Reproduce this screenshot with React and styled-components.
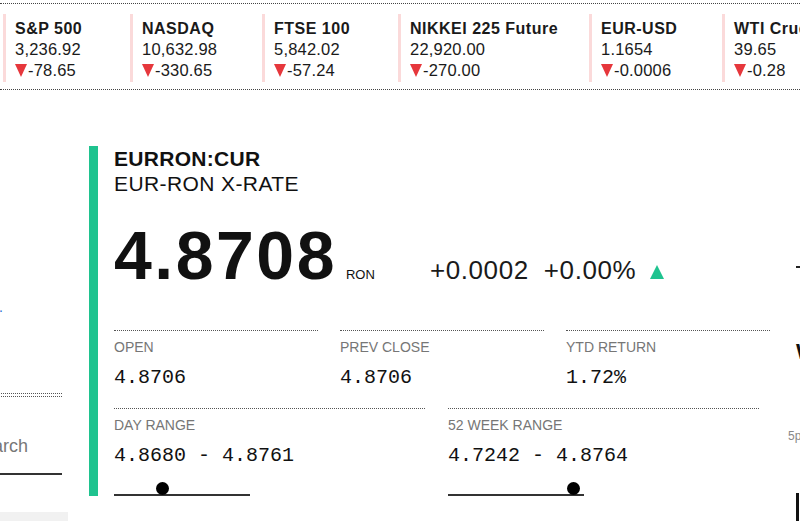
import React from 'react'
import styled, { createGlobalStyle } from 'styled-components'

const GlobalStyle = createGlobalStyle`
body{
  margin: 0;
  background: #fff;
  overflow: hidden;
  font-family: "Liberation Sans", Arial, sans-serif;
  color: #111;
}
`

const Page = styled.div`
width: 800px;
height: 521px;
overflow: hidden;
position: relative;
`

const Ticker = styled.div`
margin-top: 3px;
display: flex;
border-top: 1px dotted #444;
border-bottom: 1px dotted #444;
padding: 10px 0 7px 3px;
overflow: hidden;
white-space: nowrap;
`

const TickerItem = styled.div`
flex-shrink: 0;
width: ${props => props.$w}px;
box-sizing: border-box;
border-left: 3px solid #fbdada;
padding: 4px 0 1px 9px;
font-size: 16.5px;
line-height: 21px;
color: #1a1a1a;
letter-spacing: 0.2px;
`

const TickerName = styled.div`
font-weight: 700;
font-size: 16px;
letter-spacing: 0.5px;
`

const TickerChange = styled.div`
display: flex;
align-items: center;
`

const DownArrow = styled.span`
display: inline-block;
width: 0;
height: 0;
border-left: 6px solid transparent;
border-right: 6px solid transparent;
border-top: 13px solid #e6373c;
margin-right: 1px;
`

const Main = styled.div`
display: flex;
align-items: flex-start;
padding-top: 56px;
`

const Sidebar = styled.div`
flex-shrink: 0;
width: 100px;
margin-left: -38px;
margin-right: 27px;
display: flex;
flex-direction: column;
`

const SideLink = styled.div`
margin-top: 152px;
width: 41px;
display: flex;
justify-content: flex-end;
white-space: nowrap;
font-size: 14px;
line-height: 18px;
color: #2a6bd1;
`

const DoubleDots = styled.div`
margin-top: 77px;
height: 2px;
border-top: 1px dotted #555;
border-bottom: 1px dotted #555;
`

const SearchBox = styled.div`
margin-top: 38px;
padding: 0 0 16px 9px;
border-bottom: 2px solid #333;
font-size: 18px;
line-height: 22px;
color: #777;
`

const GreyBlock = styled.div`
margin-top: 37px;
width: 106px;
height: 20px;
background: #f1f1f1;
`

const Card = styled.div`
flex-shrink: 0;
width: 655px;
border-left: 9px solid #1fc38f;
padding-left: 16px;
`

const Symbol = styled.div`
font-size: 21px;
line-height: 25px;
font-weight: 700;
letter-spacing: 0.3px;
`

const Name = styled.div`
font-size: 21px;
line-height: 25px;
letter-spacing: 0.4px;
`

const PriceRow = styled.div`
margin-top: 25px;
display: flex;
align-items: baseline;
line-height: 68px;
height: 68px;
`

const Price = styled.span`
font-size: 68px;
font-weight: 700;
letter-spacing: 2.5px;
`

const Currency = styled.span`
font-size: 13px;
margin-left: 9px;
`

const Change = styled.span`
font-size: 26px;
letter-spacing: 0.6px;
margin-left: ${props => props.$gap}px;
color: #1a1a1a;
`

const UpArrow = styled.span`
display: inline-block;
width: 0;
height: 0;
margin-left: 14px;
border-left: 7px solid transparent;
border-right: 7px solid transparent;
border-bottom: 14px solid #1fc38f;
`

const StatsRow = styled.div`
display: grid;
grid-template-columns: repeat(${props => props.$cols}, ${props => props.$colw}px);
column-gap: ${props => props.$gap}px;
margin-top: ${props => props.$top}px;
`

const Stat = styled.div`
border-top: 1px dotted #555;
padding-top: 7px;
`

const Label = styled.div`
font-size: 14px;
line-height: 18px;
color: #767676;
text-transform: uppercase;
`

const Value = styled.div`
margin-top: 10px;
font-family: "Liberation Mono", "Courier New", monospace;
font-size: 20px;
line-height: 24px;
color: #111;
`

const Slider = styled.div`
position: relative;
margin-top: 14px;
width: 136px;
height: 14px;
border-bottom: 2px solid #333;
box-sizing: border-box;
`

const Dot = styled.span`
position: absolute;
top: 0;
width: 13px;
height: 13px;
border-radius: 50%;
background: #000;
`

const RightCol = styled.div`
flex-shrink: 0;
margin-left: 27px;
display: flex;
flex-direction: column;
`

const Dash = styled.div`
margin-top: 120px;
width: 8px;
height: 2px;
background: #222;
`

const BigLetter = styled.div`
margin-top: 72px;
font-size: 22px;
line-height: 24px;
font-weight: 700;
color: #111;
`

const AxisLabel = styled.div`
margin-top: 62px;
padding-top: 4px;
font-size: 12px;
line-height: 13px;
color: #888;
margin-left: -8px;
`

const DarkBar = styled.div`
margin-top: 50px;
width: 3px;
height: 40px;
background: #111;
`

const tickers = [
  { name: 'S&P 500', value: '3,236.92', change: '-78.65', w: 127 },
  { name: 'NASDAQ', value: '10,632.98', change: '-330.65', w: 132 },
  { name: 'FTSE 100', value: '5,842.02', change: '-57.24', w: 136 },
  { name: 'NIKKEI 225 Future', value: '22,920.00', change: '-270.00', w: 191 },
  { name: 'EUR-USD', value: '1.1654', change: '-0.0006', w: 133 },
  { name: 'WTI Crude Oil', value: '39.65', change: '-0.28', w: 160 },
]

const App = () => {
  return (
    <Page>
      <GlobalStyle />
      <Ticker>
        {tickers.map(t => (
          <TickerItem key={t.name} $w={t.w}>
            <TickerName>{t.name}</TickerName>
            <div>{t.value}</div>
            <TickerChange><DownArrow />{t.change}</TickerChange>
          </TickerItem>
        ))}
      </Ticker>

      <Main>
        <Sidebar>
          <SideLink>All currencies.</SideLink>
          <DoubleDots />
          <SearchBox>Search</SearchBox>
          <GreyBlock />
        </Sidebar>

        <Card>
          <Symbol>EURRON:CUR</Symbol>
          <Name>EUR-RON X-RATE</Name>
          <PriceRow>
            <Price>4.8708</Price>
            <Currency>RON</Currency>
            <Change $gap={55}>+0.0002</Change>
            <Change $gap={15}>+0.00%</Change>
            <UpArrow />
          </PriceRow>

          <StatsRow $cols={3} $colw={204} $gap={22} $top={41}>
            <Stat>
              <Label>Open</Label>
              <Value>4.8706</Value>
            </Stat>
            <Stat>
              <Label>Prev Close</Label>
              <Value>4.8706</Value>
            </Stat>
            <Stat>
              <Label>YTD Return</Label>
              <Value>1.72%</Value>
            </Stat>
          </StatsRow>

          <StatsRow $cols={2} $colw={311} $gap={23} $top={18}>
            <Stat>
              <Label>Day Range</Label>
              <Value>4.8680 - 4.8761</Value>
              <Slider>
                <Dot style={{ left: 'calc(36% - 6.5px)' }} />
              </Slider>
            </Stat>
            <Stat>
              <Label>52 Week Range</Label>
              <Value>4.7242 - 4.8764</Value>
              <Slider>
                <Dot style={{ left: 'calc(92% - 6.5px)' }} />
              </Slider>
            </Stat>
          </StatsRow>
        </Card>

        <RightCol>
          <Dash />
          <BigLetter>W</BigLetter>
          <AxisLabel>5pm</AxisLabel>
          <DarkBar />
        </RightCol>
      </Main>
    </Page>
  )
}

export default App
